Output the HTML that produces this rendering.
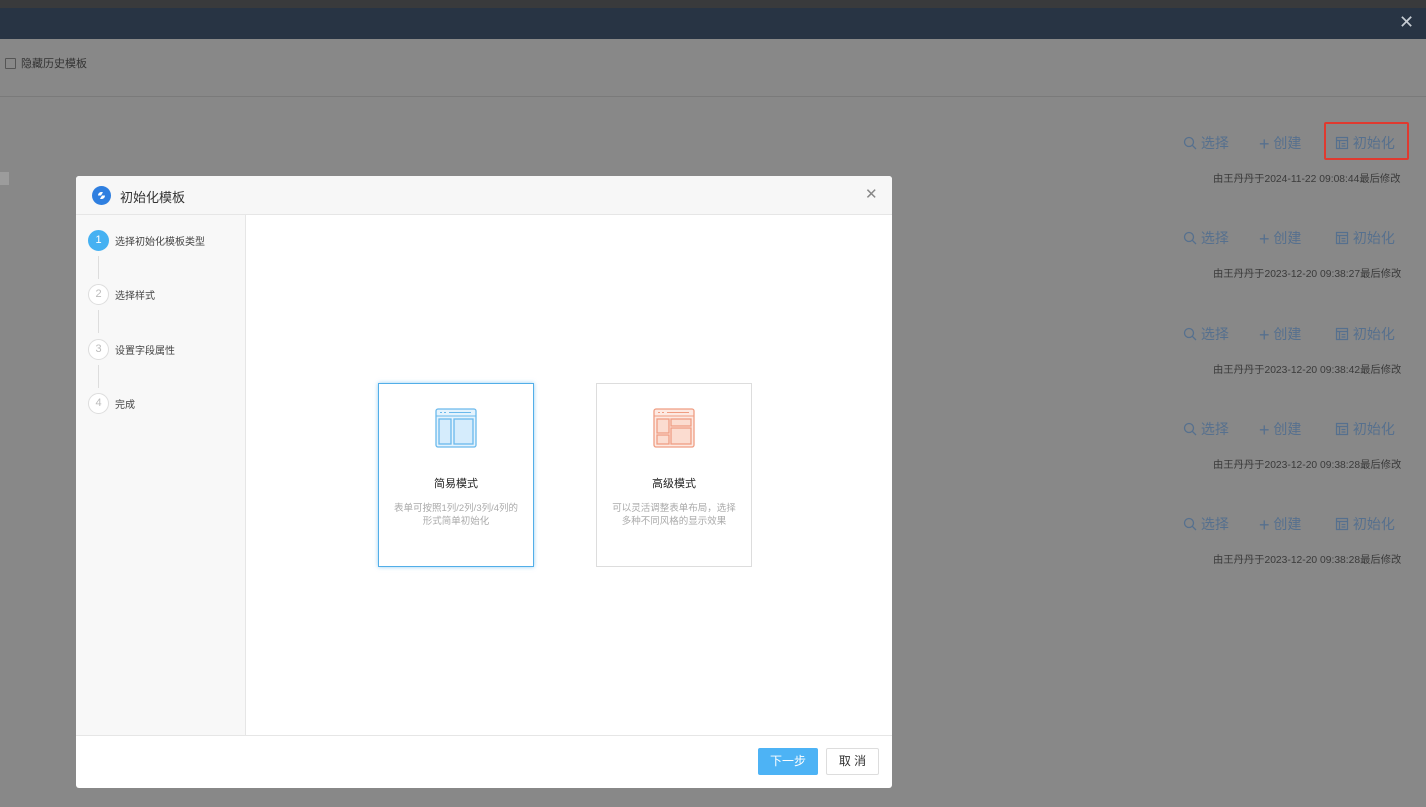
<!DOCTYPE html>
<html><head><meta charset="utf-8"><style>
*{margin:0;padding:0;box-sizing:border-box}
body{width:1426px;height:807px;background:#888888;font-family:"Liberation Sans","Noto Sans CJK SC",sans-serif;position:relative;overflow:hidden}
.abs{position:absolute}
.top0{left:0;top:0;width:1426px;height:8px;background:#393a3c}
.top{left:0;top:8px;width:1426px;height:31px;background:#283444}
.hr{left:0;top:96px;width:1426px;height:1px;background:#7a7a7a}
.act{font-size:14px;color:#56708e;white-space:nowrap}
.date{font-size:10.3px;color:#3a3a3a;white-space:nowrap}
.modal{left:76px;top:176px;width:816px;height:612px;background:#fff;border-radius:3px}
.mh{left:0;top:0;width:816px;height:39px;background:#f7f7f7;border-bottom:1px solid #e6e6e6;border-radius:3px 3px 0 0}
.side{left:0;top:39px;width:170px;height:520px;background:#f8f8f8;border-right:1px solid #e6e6e6}
.step{position:absolute;left:12px;width:21px;height:21px;border-radius:50%;border:1px solid #ddd;color:#bbb;font-size:11px;text-align:center;line-height:19px;background:#fff}
.sl{position:absolute;left:39px;font-size:10px;color:#444}
.vl{position:absolute;left:22px;width:1px;height:23px;background:#ddd}
.card{position:absolute;top:207px;width:156px;height:184px;background:#fff;text-align:center}
.ct{position:absolute;top:91px;width:100%;font-size:11px;color:#222}
.cd{position:absolute;top:118px;left:14px;right:14px;font-size:9.5px;color:#aaa;line-height:13px}
.ft{left:0;top:559px;width:816px;height:1px;background:#e6e6e6}
</style></head><body>
<div class="abs top0"></div>
<div class="abs top"></div>
<div class="abs" style="left:1399px;top:12px;color:#c6ccd3;font-size:18px">✕</div>
<div class="abs" style="left:5px;top:58px;width:11px;height:11px;border:1px solid #555;border-radius:1px"></div>
<div class="abs" style="left:21px;top:55px;font-size:11px;color:#333">隐藏历史模板</div>
<div class="abs hr"></div>
<div class="abs" style="left:0;top:172px;width:9px;height:13px;background:#9c9c9c"></div>

<div class="abs" style="left:1324px;top:122px;width:85px;height:38px;border:2px solid #e03a2f;border-radius:2px"></div>
<div id="rows"></div>
<script>
var ys=[142,237,333,428,523],ds=["2024-11-22 09:08:44","2023-12-20 09:38:27","2023-12-20 09:38:42","2023-12-20 09:38:28","2023-12-20 09:38:28"],h="";
ys.forEach(function(y,i){
h+='<div class="abs act" style="left:1183px;top:'+(y-9)+'px"><svg width="14" height="14" style="vertical-align:-2px" viewBox="0 0 14 14"><circle cx="6" cy="6" r="4.5" fill="none" stroke="#56708e" stroke-width="1.3"/><path d="M9.3 9.3L13 13" stroke="#56708e" stroke-width="1.3"/></svg> 选择</div>';
h+='<div class="abs act" style="left:1259px;top:'+(y-9)+'px"><span style="font-size:18px;vertical-align:-2px;font-weight:300">+</span> 创建</div>';
h+='<div class="abs act" style="left:1335px;top:'+(y-9)+'px"><svg width="14" height="14" style="vertical-align:-2px" viewBox="0 0 14 14"><path d="M1.5 1.5h11v11h-11zM1.5 4.5h11M4.5 4.5v8M6.5 7.5h4M6.5 10h4" fill="none" stroke="#56708e" stroke-width="1.2"/></svg> 初始化</div>';
h+='<div class="abs date" style="left:1213px;top:'+(y+28)+'px">由王丹丹于'+ds[i]+'最后修改</div>';
});
document.getElementById('rows').innerHTML=h;
</script>

<div class="abs modal">
 <div class="abs mh">
  <svg class="abs" style="left:16px;top:10px" width="19" height="19" viewBox="0 0 19 19"><circle cx="9.5" cy="9.5" r="9.5" fill="#2f7fe0"/><path d="M6 9.5a3.5 3.5 0 0 1 5-3.2l-2 3.2h4a3.5 3.5 0 0 1-5 3.2l2-3.2z" fill="#fff"/></svg>
  <div class="abs" style="left:44px;top:11px;font-size:13px;color:#333">初始化模板</div>
  <div class="abs" style="left:789px;top:9px;font-size:15px;color:#888">✕</div>
 </div>
 <div class="abs side">
  <div class="step" style="top:15px;background:#45b1f2;border-color:#45b1f2;color:#fff">1</div><div class="sl" style="top:18px">选择初始化模板类型</div>
  <div class="vl" style="top:41px"></div>
  <div class="step" style="top:69px">2</div><div class="sl" style="top:72px">选择样式</div>
  <div class="vl" style="top:95px"></div>
  <div class="step" style="top:124px">3</div><div class="sl" style="top:127px">设置字段属性</div>
  <div class="vl" style="top:150px"></div>
  <div class="step" style="top:178px">4</div><div class="sl" style="top:181px">完成</div>
 </div>
 <div class="card" style="left:302px;border:1px solid #52aee8;box-shadow:0 0 4px rgba(82,174,232,.6)">
  <svg style="margin-top:24px" width="42" height="40" viewBox="0 0 42 40"><rect x="1" y="1" width="40" height="38" rx="2" fill="#e4f3fd" stroke="#6ab9ec" stroke-width="1.3"/><path d="M1 8h40" stroke="#6ab9ec"/><path d="M5 4.5h2M9 4.5h2M14 4.5h22" stroke="#6ab9ec"/><rect x="4" y="11" width="12" height="25" fill="#d5ecfc" stroke="#6ab9ec" stroke-width="1.3"/><rect x="19" y="11" width="19" height="25" fill="#d5ecfc" stroke="#6ab9ec" stroke-width="1.3"/></svg>
  <div class="ct">简易模式</div>
  <div class="cd">表单可按照1列/2列/3列/4列的形式简单初始化</div>
 </div>
 <div class="card" style="left:520px;border:1px solid #ddd">
  <svg style="margin-top:24px" width="42" height="40" viewBox="0 0 42 40"><rect x="1" y="1" width="40" height="38" rx="2" fill="#fde9e2" stroke="#ef9d82" stroke-width="1.3"/><path d="M1 8h40" stroke="#ef9d82"/><path d="M5 4.5h2M9 4.5h2M14 4.5h22" stroke="#ef9d82"/><rect x="4" y="11" width="12" height="14" fill="#fbdcd0" stroke="#ef9d82" stroke-width="1.3"/><rect x="4" y="27" width="12" height="9" fill="#fbdcd0" stroke="#ef9d82" stroke-width="1.3"/><rect x="18" y="11" width="20" height="7" fill="#fbdcd0" stroke="#ef9d82" stroke-width="1.3"/><rect x="18" y="20" width="20" height="16" fill="#fbdcd0" stroke="#ef9d82" stroke-width="1.3"/></svg>
  <div class="ct">高级模式</div>
  <div class="cd">可以灵活调整表单布局，选择多种不同风格的显示效果</div>
 </div>
 <div class="abs ft"></div>
 <div class="abs" style="left:682px;top:572px;width:60px;height:27px;background:#4db3f5;border-radius:2px;color:#fff;font-size:12px;text-align:center;line-height:27px">下一步</div>
 <div class="abs" style="left:750px;top:572px;width:53px;height:27px;border:1px solid #ddd;border-radius:2px;color:#333;font-size:12px;text-align:center;line-height:25px">取 消</div>
</div>
</body></html>
